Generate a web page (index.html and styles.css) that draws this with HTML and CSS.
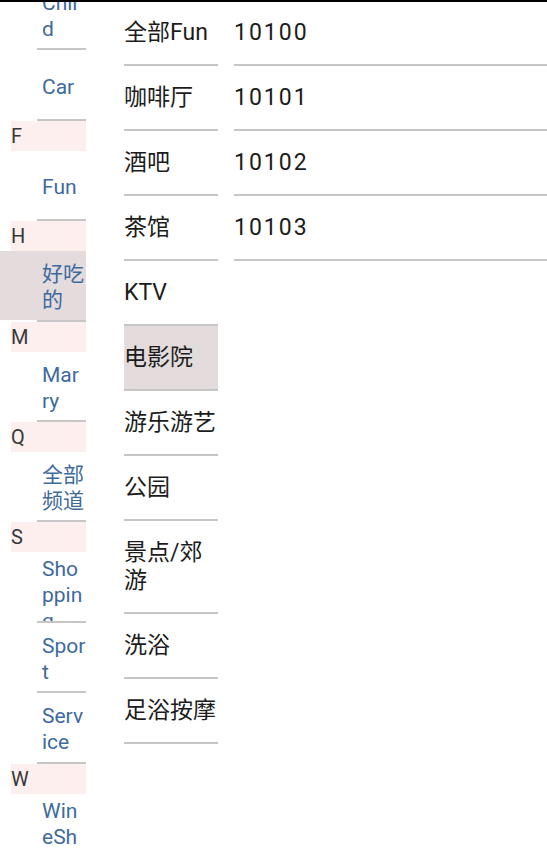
FILE: index.html
```html
<!DOCTYPE html>
<html lang="zh-CN">
<head>
<meta charset="utf-8">
<title>分类</title>
<link rel="stylesheet" href="styles.css">
</head>
<body>
<div class="topbar"></div>
<div class="main">
  <div class="letters">
    <div class="letters-inner">
      <div class="item"><span class="label">Child</span></div>
      <div class="sep"></div>
      <div class="item"><span class="label">Car</span></div>
      <div class="sep"></div>
      <div class="head">F</div>
      <div class="item"><span class="label">Fun</span></div>
      <div class="sep"></div>
      <div class="head">H</div>
      <div class="item item-active"><span class="label">好吃的</span></div>
      <div class="sep"></div>
      <div class="head">M</div>
      <div class="item"><span class="label">Marry</span></div>
      <div class="sep"></div>
      <div class="head">Q</div>
      <div class="item"><span class="label">全部频道</span></div>
      <div class="sep"></div>
      <div class="head">S</div>
      <div class="item"><span class="label">Shopping</span></div>
      <div class="sep"></div>
      <div class="item"><span class="label">Sport</span></div>
      <div class="sep"></div>
      <div class="item"><span class="label">Service</span></div>
      <div class="sep"></div>
      <div class="head">W</div>
      <div class="item"><span class="label">WineShop</span></div>
      <div class="sep"></div>
    </div>
  </div>
  <div class="cats">
    <div class="cat">全部Fun</div>
    <div class="cat">咖啡厅</div>
    <div class="cat">酒吧</div>
    <div class="cat">茶馆</div>
    <div class="cat">KTV</div>
    <div class="cat cat-active">电影院</div>
    <div class="cat">游乐游艺</div>
    <div class="cat">公园</div>
    <div class="cat">景点/郊游</div>
    <div class="cat">洗浴</div>
    <div class="cat">足浴按摩</div>
  </div>
  <div class="subs">
    <div class="sub">10100</div>
    <div class="sub">10101</div>
    <div class="sub">10102</div>
    <div class="sub">10103</div>
  </div>
</div>
</body>
</html>
```
FILE: styles.css
```css
html, body {
  margin: 0;
  padding: 0;
  background: #ffffff;
}
body {
  width: 547px;
  height: 858px;
  overflow: hidden;
  font-family: "Roboto", "Noto Sans CJK SC", sans-serif;
}
.topbar {
  height: 2px;
  margin-bottom: -1px;
  background: #000000;
  position: relative;
  z-index: 2;
}
.main {
  display: flex;
  align-items: flex-start;
  height: 857px;
}
.letters {
  width: 86px;
  height: 857px;
  overflow: hidden;
  flex: none;
}
.letters-inner {
  margin-top: -21px;
}
.item {
  height: 68.4px;
  box-sizing: border-box;
  padding-top: 4px;
  padding-left: 42px;
  display: flex;
  flex-direction: column;
  align-items: flex-start;
  overflow: hidden;
}
.item-active {
  background: #e3dbdc;
}
.label {
  width: 44.1px;
  margin: auto 0;
  font-size: 21px;
  line-height: 26px;
  color: #3e6a9e;
  word-break: break-all;
}
.sep {
  height: 2px;
  margin-left: 37px;
  background: #c6c6c6;
}
.head {
  height: 30px;
  margin-left: 11px;
  background: #fdefed;
  color: #383838;
  font-size: 20px;
  line-height: 31px;
}
.cats {
  width: 94px;
  margin-left: 38px;
  flex: none;
}
.cat {
  padding: 18px 0 17px;
  font-size: 23px;
  line-height: 28px;
  color: #1c1c1c;
  border-bottom: 2px solid #c6c6c6;
}
.cat-active {
  background: #e4dcdc;
}
.subs {
  flex: 1;
  margin-left: 16px;
}
.sub {
  padding: 18px 0 17px;
  font-size: 23px;
  line-height: 28px;
  letter-spacing: 2px;
  color: #1c1c1c;
  border-bottom: 2px solid #c6c6c6;
}
```
